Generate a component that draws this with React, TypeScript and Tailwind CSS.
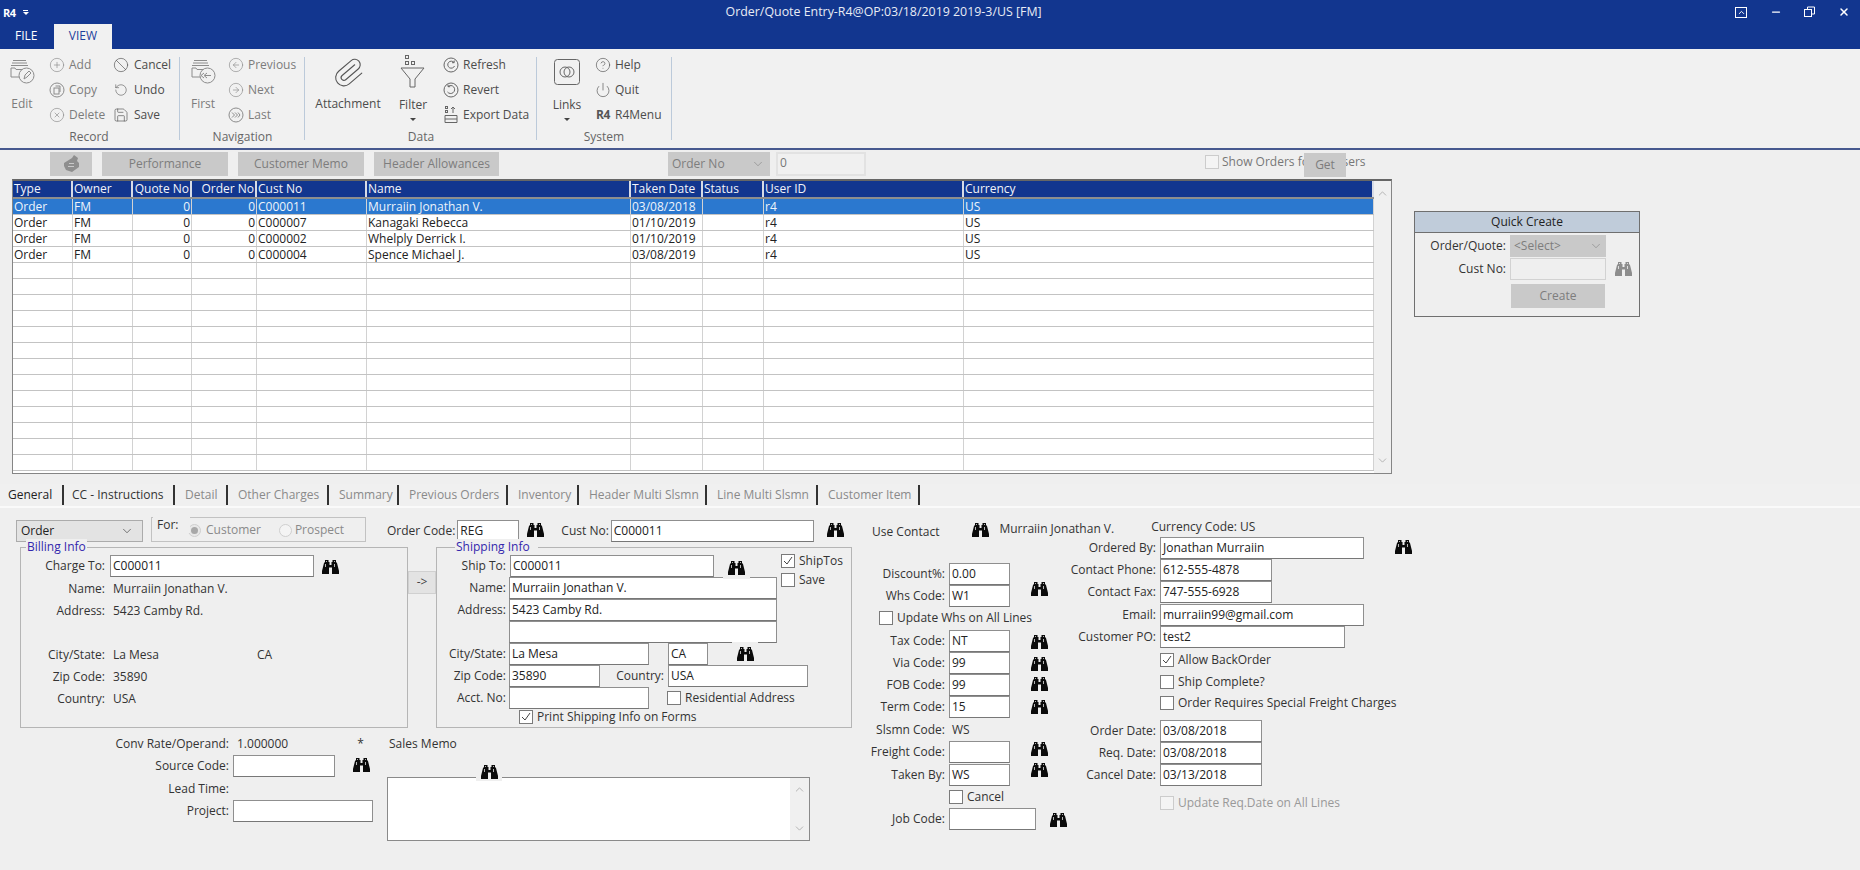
import { ReactNode } from 'react';
import {
  Ban, ChevronDown, ChevronUp, CircleArrowLeft, CircleArrowRight, CircleHelp, CirclePlus, CircleX, Minus, Paperclip, Power, RotateCcw, Save, X,
} from 'lucide-react';

const columns = [
  { title: 'Type', width: 'w-[60px]' },
  { title: 'Owner', width: 'w-[60px]' },
  { title: 'Quote No', width: 'w-[59px]', right: true },
  { title: 'Order No', width: 'w-[65px]', right: true },
  { title: 'Cust No', width: 'w-[110px]' },
  { title: 'Name', width: 'w-[264px]' },
  { title: 'Taken Date', width: 'w-[72px]' },
  { title: 'Status', width: 'w-[61px]' },
  { title: 'User ID', width: 'w-[200px]' },
  { title: 'Currency', width: 'w-[410px]' },
];

const orders = [
  ['Order', 'FM', '0', '0', 'C000011', 'Murraiin Jonathan V.', '03/08/2018', '', 'r4', 'US'],
  ['Order', 'FM', '0', '0', 'C000007', 'Kanagaki Rebecca', '01/10/2019', '', 'r4', 'US'],
  ['Order', 'FM', '0', '0', 'C000002', 'Whelply Derrick I.', '01/10/2019', '', 'r4', 'US'],
  ['Order', 'FM', '0', '0', 'C000004', 'Spence Michael J.', '03/08/2019', '', 'r4', 'US'],
  ...Array.from({ length: 13 }, () => ['', '', '', '', '', '', '', '', '', '']),
];

const tabs = [
  { label: 'General', width: 'w-[64px]', text: 'text-[#222] pl-2' },
  { label: 'CC - Instructions', width: 'w-[111px]', text: 'text-[#333] pl-2' },
  { label: 'Detail', width: 'w-[53px]', text: 'text-[#8a8a8a] pl-2.5' },
  { label: 'Other Charges', width: 'w-[101px]', text: 'text-[#8a8a8a] pl-2.5' },
  { label: 'Summary', width: 'w-[70px]', text: 'text-[#8a8a8a] pl-2.5' },
  { label: 'Previous Orders', width: 'w-[109px]', text: 'text-[#8a8a8a] pl-2.5' },
  { label: 'Inventory', width: 'w-[71px]', text: 'text-[#8a8a8a] pl-2.5' },
  { label: 'Header Multi Slsmn', width: 'w-[128px]', text: 'text-[#8a8a8a] pl-2.5' },
  { label: 'Line Multi Slsmn', width: 'w-[111px]', text: 'text-[#8a8a8a] pl-2.5' },
  { label: 'Customer Item', width: 'w-[102px]', text: 'text-[#8a8a8a] pl-2.5' },
];

// ribbon artwork
const StackIcon = ({ children }: { children: ReactNode }) => (
  <svg width="28" height="28" viewBox="0 0 28 28" fill="none" stroke="#8c8c8c" strokeWidth="1">
    <path d="M5 2.5h13M4 5h15M3 7.5h17" />
    <path d="M11 19H3V10h4l1 1.5h10" />
    <circle cx="18.5" cy="17.5" r="7.5" fill="#f1f1f1" />
    {children}
  </svg>
);

const FilterIcon = () => (
  <svg width="28" height="34" viewBox="0 0 28 34" fill="none" stroke="#666" strokeWidth="1">
    <rect x="6.5" y="0.5" width="3" height="3" />
    <rect x="6.5" y="6.5" width="3" height="3" />
    <rect x="12.5" y="6.5" width="3" height="3" />
    <path d="M2 13h23l-9 11v8h-5v-8z" />
  </svg>
);

const LinksIcon = () => (
  <svg width="26" height="26" viewBox="0 0 26 26" fill="none" stroke="#666" strokeWidth="1">
    <rect x="0.5" y="0.5" width="25" height="25" rx="3" />
    <circle cx="11" cy="13" r="5" />
    <circle cx="15" cy="13" r="5" />
  </svg>
);

const CircleGlyph = ({ d, stroke = '#666' }: { d: string; stroke?: string }) => (
  <svg width="16" height="16" viewBox="0 0 16 16" fill="none" stroke={stroke} strokeWidth="1">
    <circle cx="8" cy="8" r="7" />
    <path d={d} />
  </svg>
);

const CopyIcon = () => (
  <svg width="16" height="16" viewBox="0 0 16 16" fill="none" stroke="#8c8c8c" strokeWidth="1">
    <circle cx="8" cy="8" r="7" />
    <rect x="5" y="6" width="5" height="6" />
    <path d="M6.5 4h4.5v6" />
  </svg>
);

const ExportIcon = () => (
  <svg width="14" height="17" viewBox="0 0 14 17" fill="none" stroke="#666" strokeWidth="1">
    <rect x="1.5" y="0.5" width="2" height="2" />
    <rect x="1.5" y="4.5" width="2" height="2" />
    <path d="M9 7V1M7 3l2-2 2 2" />
    <path d="M1 9.5h12M1 9.5v7h12v-7M1 13h12" />
  </svg>
);

const BinocularsIcon = () => (
  <svg width="17" height="15" viewBox="0 0 17 15">
    <path fill="currentColor" d="M3 1h3.5v2H7.500v3h2V3H10.500V1H14v2l1 1 2 8v3H10V8.500H7V15H0v-3l2-8 1-1z" />
    <path fill="#fff" opacity="0.7" d="M4 2h1v1H4zM12 2h1v1h-1zM3 5h1v3H3zM12 5h1v3h-1z" />
  </svg>
);

const Logo = ({ className }: { className: string }) => (
  <span className={`font-bold tracking-[-0.5px] leading-none ${className}`}>R4</span>
);

const LargeItem = ({ icon, label, width, arrow, muted }: { icon: ReactNode; label: string; width: string; arrow?: boolean; muted?: boolean }) => (
  <div className={`flex flex-col items-center shrink-0 ${width}`}>
    <div className="h-[43px] pb-[3px] flex items-center justify-center">{icon}</div>
    <span className={`h-[17px] leading-[17px] ${arrow ? 'mt-[1px]' : ''} ${muted ? 'text-[#7c7c7c]' : 'text-[#4c4c4c]'}`}>{label}</span>
    {arrow && <span className="mt-[5px] w-0 h-0 border-x-[3px] border-t-[3px] border-x-transparent border-t-[#444]" />}
  </div>
);

const SmallItem = ({ icon, label, muted, gap = 'ml-1' }: { icon: ReactNode; label: string; muted?: boolean; gap?: string }) => (
  <div className="h-[25px] flex items-center">
    <span className="w-4 h-4 flex items-center justify-center shrink-0">{icon}</span>
    <span className={`${gap} whitespace-nowrap ${muted ? 'text-[#7c7c7c]' : 'text-[#4c4c4c]'}`}>{label}</span>
  </div>
);

const RibbonGroup = ({ width, label, labelPad, children }: { width: string; label: string; labelPad: string; children: ReactNode }) => (
  <div className={`flex flex-col shrink-0 ${width}`}>
    <div className="h-[79px] pt-[3px] flex">{children}</div>
    <div className={`h-[18px] leading-[18px] text-[#666] text-center ${labelPad}`}>{label}</div>
  </div>
);

const Separator = () => <div className="w-px h-[83px] mt-2 bg-[#bccada] shrink-0" />;

// form controls
const Binoc = ({ className = '', disabled }: { className?: string; disabled?: boolean }) => (
  <span className={`shrink-0 flex items-center justify-center ${disabled ? 'text-[#8d8d8d]' : 'text-[#0b0b0b]'} ${className}`}>
    <BinocularsIcon />
  </span>
);

const Input = ({ value = '', className }: { value?: string; className: string }) => (
  <div className={`h-[22px] bg-white border border-[#8f8f8f] border-b-[#777] pl-[2px] leading-[19px] text-[#222] overflow-hidden shrink-0 ${className}`}>
    {value}
  </div>
);

const Check = ({ checked, disabled }: { checked?: boolean; disabled?: boolean }) => (
  <span className={`w-[14px] h-[14px] flex items-center justify-center border shrink-0 ${disabled ? 'border-[#ccc] bg-[#f4f4f4]' : 'border-[#7a7a7a] bg-white'}`}>
    {checked && (
      <svg width="12" height="12" viewBox="0 0 12 12" fill="none" stroke="#444" strokeWidth="1">
        <path d="M2 6l3 3 5-7" />
      </svg>
    )}
  </span>
);

const CheckRow = ({ label, checked, disabled, className = '' }: { label: string; checked?: boolean; disabled?: boolean; className?: string }) => (
  <div className={`flex items-center h-[14px] ${className}`}>
    <Check checked={checked} disabled={disabled} />
    <span className={`ml-[4px] whitespace-nowrap ${disabled ? 'text-[#999]' : 'text-[#333]'}`}>{label}</span>
  </div>
);

const Label = ({ children, className }: { children?: ReactNode; className: string }) => (
  <span className={`text-right whitespace-nowrap text-[#333] shrink-0 ${className}`}>{children}</span>
);

const Legend = ({ children, className }: { children: ReactNode; className: string }) => (
  <span className={`absolute -top-[9px] bg-[#efefef] px-[1px] leading-[16px] text-[#3427ad] ${className}`}>{children}</span>
);

const ActionButton = ({ children, className }: { children: ReactNode; className: string }) => (
  <div className={`h-6 bg-[#c9c9c9] flex items-center justify-center text-[#7d7d7d] shrink-0 ${className}`}>{children}</div>
);

export default function App() {
  return (
    <div className="w-[1860px] h-[870px] overflow-hidden bg-[#efefef] text-[12px] font-['Open_Sans',sans-serif]">
      {/* title bar */}
      <div className="h-6 bg-[#12368f] text-white flex items-center relative">
        <Logo className="ml-[3px] text-[11px]" />
        <span className="ml-[7px] flex flex-col gap-[1px] items-center w-[6px]">
          <span className="w-[5px] h-px bg-white" />
          <span className="w-0 h-0 border-x-[3px] border-t-[3px] border-x-transparent border-t-white" />
        </span>
        <span className="ml-[697px] text-[12.4px] text-[#e8ecf5] whitespace-nowrap">Order/Quote Entry-R4@OP:03/18/2019 2019-3/US [FM]</span>
        <div className="ml-auto flex items-center">
          <span className="w-3 h-[11px] border border-white flex items-center justify-center">
            <ChevronUp size={9} strokeWidth={2.5} />
          </span>
          <Minus size={12} strokeWidth={2.5} className="ml-[23px]" />
          <svg width="12" height="12" viewBox="0 0 12 12" fill="none" stroke="white" className="ml-[22px]">
            <rect x="0.5" y="3.5" width="7" height="7" />
            <path d="M3.5 3V1h7v7H8" />
          </svg>
          <X size={12} strokeWidth={3} className="ml-[22px] mr-[10px]" />
        </div>
      </div>

      {/* menu tabs */}
      <div className="h-[25px] bg-[#12368f] flex items-end">
        <span className="w-[54px] h-[25px] pl-[15px] leading-[24px] text-white">FILE</span>
        <span className="w-[58px] h-[25px] bg-[#f1f1f1] text-center leading-[24px] text-[#1e3f9c]">VIEW</span>
      </div>

      {/* ribbon */}
      <div className="h-[101px] bg-[#f1f1f1] border-b-2 border-[#47598f] flex">
        <RibbonGroup width="w-[179px]" label="Record" labelPad="pr-[1px]">
          <LargeItem
            width="w-11"
            muted
            label="Edit"
            icon={
              <StackIcon>
                <path d="M16 21l1-4 4-4 2 2-4 4z" />
              </StackIcon>
            }
          />
          <div className="ml-[5px] w-[64px]">
            <SmallItem muted icon={<CirclePlus size={16} strokeWidth={1} color="#8c8c8c" />} label="Add" />
            <SmallItem muted icon={<CopyIcon />} label="Copy" />
            <SmallItem muted icon={<CircleX size={16} strokeWidth={1} color="#8c8c8c" />} label="Delete" />
          </div>
          <div>
            <SmallItem gap="ml-[5px]" icon={<Ban size={16} strokeWidth={1} color="#555" />} label="Cancel" />
            <SmallItem gap="ml-[5px]" icon={<RotateCcw size={14} strokeWidth={1} color="#555" />} label="Undo" />
            <SmallItem gap="ml-[5px]" icon={<Save size={16} strokeWidth={1} color="#555" />} label="Save" />
          </div>
        </RibbonGroup>
        <Separator />
        <RibbonGroup width="w-[124px]" label="Navigation" labelPad="pl-[1px]">
          <LargeItem
            width="w-[46px]"
            muted
            label="First"
            icon={
              <StackIcon>
                <path d="M22 17.5h-6M18 15l-3 2.5 3 2.5M15 15l-3 2.5 3 2.5" />
              </StackIcon>
            }
          />
          <div className="ml-[2px]">
            <SmallItem muted icon={<CircleArrowLeft size={16} strokeWidth={1} color="#8c8c8c" />} label="Previous" />
            <SmallItem muted icon={<CircleArrowRight size={16} strokeWidth={1} color="#8c8c8c" />} label="Next" />
            <SmallItem muted icon={<CircleGlyph stroke="#8c8c8c" d="M4 5.500L6.500 8 4 10.500M7 5.500L9.500 8 7 10.500M10 5.500L12 8l-2 2.500" />} label="Last" />
          </div>
        </RibbonGroup>
        <Separator />
        <RibbonGroup width="w-[231px]" label="Data" labelPad="pl-[1px]">
          <LargeItem
            width="w-[80px] ml-[3px]"
            label="Attachment"
            icon={<Paperclip size={33} strokeWidth={0.8} color="#555" className="rotate-[5deg]" />}
          />
          <LargeItem width="w-10 ml-[5px]" label="Filter" arrow icon={<FilterIcon />} />
          <div className="ml-[10px]">
            <SmallItem icon={<CircleGlyph d="M11 5.500A3.500 3.500 0 1 0 11.500 9M11.200 3.500v2.200H9" />} label="Refresh" />
            <SmallItem icon={<CircleGlyph d="M5 4.500a4 4 0 1 1-.5 5.500M5 2.500v2.200h2.200" />} label="Revert" />
            <SmallItem icon={<ExportIcon />} label="Export Data" />
          </div>
        </RibbonGroup>
        <Separator />
        <RibbonGroup width="w-[134px]" label="System" labelPad="">
          <LargeItem width="w-10 ml-[10px]" label="Links" arrow icon={<LinksIcon />} />
          <div className="ml-2">
            <SmallItem icon={<CircleHelp size={16} strokeWidth={1} color="#555" />} label="Help" />
            <SmallItem icon={<Power size={16} strokeWidth={1} color="#555" />} label="Quit" />
            <SmallItem icon={<Logo className="text-[12px] text-[#555]" />} label="R4Menu" />
          </div>
        </RibbonGroup>
        <Separator />
      </div>

      {/* action row */}
      <div className="h-[29px] pt-[2px] pl-[50px] flex items-start">
        <ActionButton className="w-[42px]">
          <svg width="20" height="18" viewBox="0 0 20 18" fill="#8e8e8e">
            <path d="M3 8l8-5 2-3 4 3-1 3 2 2v4l-7 5-6-2-2-4z" />
            <path d="M8 8h5v1H8zM7 11h6v1H7z" fill="#c9c9c9" />
          </svg>
        </ActionButton>
        <ActionButton className="w-[126px] ml-[10px]">Performance</ActionButton>
        <ActionButton className="w-[126px] ml-[10px]">Customer Memo</ActionButton>
        <ActionButton className="w-[125px] ml-[10px]">Header Allowances</ActionButton>
        <ActionButton className="w-[102px] ml-[169px] !justify-start pl-1">
          <span>Order No</span>
          <ChevronDown size={14} strokeWidth={1} className="ml-auto mr-[5px]" />
        </ActionButton>
        <div className="w-[90px] h-6 ml-[6px] border-2 border-[#e2e2e2] bg-[#f0f0f0] pl-[2px] leading-[18px] text-[#777]">0</div>
        <div className="ml-[339px] mt-[1px] flex items-center relative">
          <Check disabled />
          <span className="ml-[3px] whitespace-nowrap text-[#777]">Show Orders for All Users</span>
          <ActionButton className="absolute left-[99px] top-0 w-[42px]">Get</ActionButton>
        </div>
      </div>

      {/* orders grid and quick create */}
      <div className="flex items-start">
        <div className="ml-3 w-[1380px] h-[295px] bg-white border border-[#858585] border-t-2 border-t-[#666] flex overflow-hidden">
          <div className="w-[1361px] shrink-0">
            <div className="flex h-[18px] bg-[#12368f] border-b-2 border-[#8e8e8e]">
              {columns.map((col) => (
                <div
                  key={col.title}
                  className={`${col.width} shrink-0 border-r-2 border-[#d8dce6] px-[1px] leading-[15px] text-[#f2f4fa] whitespace-nowrap overflow-hidden ${col.right ? 'text-right' : ''}`}
                >
                  {col.title}
                </div>
              ))}
            </div>
            {orders.map((row, i) => (
              <div key={i} className={`flex h-4 border-b border-[#c3c3c3] ${i === 0 ? 'bg-[#2b78cf] text-[#eef4fb]' : 'text-[#222]'}`}>
                {row.map((cell, c) => (
                  <div
                    key={c}
                    className={`${columns[c].width} shrink-0 border-r border-[#d2d2d2] px-[1px] leading-[15px] overflow-hidden whitespace-nowrap ${columns[c].right ? 'text-right' : ''}`}
                  >
                    {cell}
                  </div>
                ))}
              </div>
            ))}
          </div>
          <div className="flex-1 bg-[#f0f0f0] flex flex-col items-center justify-between py-1.5 text-[#a6a6a6]">
            <ChevronUp size={13} strokeWidth={1.5} />
            <ChevronDown size={13} strokeWidth={1.5} />
          </div>
        </div>

        <div className="ml-[22px] mt-8 w-[226px] h-[106px] border border-[#6f6f6f]">
          <div className="h-[21px] bg-[#c0ccda] border-b border-[#6f6f6f] text-center leading-[19px] text-[#222]">Quick Create</div>
          <div className="flex h-[23px] mt-[1px] items-center">
            <Label className="w-[91px]">Order/Quote:</Label>
            <div className="ml-1 w-[96px] h-[22px] bg-[#c9c9c9] flex items-center pl-1 text-[#7d7d7d]">
              &lt;Select&gt;
              <ChevronDown size={14} strokeWidth={1} className="ml-auto mr-[3px]" />
            </div>
          </div>
          <div className="flex h-[23px] items-center">
            <Label className="w-[91px]">Cust No:</Label>
            <div className="ml-1 w-[96px] h-[22px] bg-[#efefef] border border-[#d2d2d2]" />
            <Binoc disabled className="ml-[9px]" />
          </div>
          <ActionButton className="ml-[96px] mt-[4px] w-[94px]">Create</ActionButton>
        </div>
      </div>

      {/* detail tabs */}
      <div className="mt-[10px] h-[24px] bg-[#f0f0f0] border-b-2 border-[#fafafa] flex">
        {tabs.map((tab) => (
          <div key={tab.label} className={`${tab.width} ${tab.text} h-[20px] mt-[1px] border-r-2 border-[#333] leading-[20px] whitespace-nowrap shrink-0`}>
            {tab.label}
          </div>
        ))}
      </div>

      {/* general tab */}
      <div className="flex items-start">
        <div className="w-[860px] shrink-0">
          <div className="flex items-start h-[28px] mt-[9px]">
            <div className="ml-4 mt-[3px] w-[127px] h-[22px] bg-[#e3e3e3] border border-[#ababab] flex items-center pl-1 text-[#222]">
              Order
              <ChevronDown size={14} strokeWidth={1} className="ml-auto mr-2" />
            </div>
            <div className="ml-2 w-[215px] h-[25px] border border-[#c2c2c2] flex items-center relative">
              <span className="absolute -top-[1px] left-[1px] pl-1 pr-3 bg-[#efefef] leading-[16px] text-[#333]">For:</span>
              <span className="ml-[36px] mt-[1px] w-[13px] h-[13px] rounded-full border border-[#cfcfcf] bg-[#e8e8e8] flex items-center justify-center">
                <span className="w-[7px] h-[7px] rounded-full bg-[#a8a8a8]" />
              </span>
              <span className="ml-[5px] mt-[1px] text-[#8a8a8a]">Customer</span>
              <span className="ml-[18px] mt-[1px] w-[13px] h-[13px] rounded-full border border-[#cfcfcf] bg-[#f4f4f4]" />
              <span className="ml-[3px] mt-[1px] text-[#8a8a8a]">Prospect</span>
            </div>
            <Label className="ml-[21px] mt-[5px]">Order Code:</Label>
            <Input value="REG" className="ml-[2px] mt-[3px] w-[62px]" />
            <Binoc className="ml-2 mt-[5px]" />
            <Label className="ml-[17px] mt-[5px]">Cust No:</Label>
            <Input value="C000011" className="ml-[2px] mt-[3px] w-[203px]" />
            <Binoc className="ml-[13px] mt-[5px]" />
          </div>

          <div className="flex items-start mt-[2px]">
            <div className="ml-5 w-[388px] h-[181px] border border-[#b5b5b5] relative pt-[6px] shrink-0">
              <Legend className="left-[5px]">Billing Info</Legend>
              <div className="flex items-center h-[24px]">
                <Label className="w-[84px]">Charge To:</Label>
                <Input value="C000011" className="ml-[5px] w-[204px]" />
                <Binoc className="ml-2" />
              </div>
              {[
                ['Name:', 'Murraiin Jonathan V.', ''],
                ['Address:', '5423 Camby Rd.', ''],
                ['', '', ''],
                ['City/State:', 'La Mesa', 'CA'],
                ['Zip Code:', '35890', ''],
                ['Country:', 'USA', ''],
              ].map(([label, value, state], i) => (
                <div key={i} className="flex items-center h-[22px]">
                  <Label className="w-[84px]">{label}</Label>
                  <span className="ml-2 w-[144px] text-[#333]">{value}</span>
                  <span className="text-[#333]">{state}</span>
                </div>
              ))}
            </div>
            <div className="mt-6 w-[28px] h-[23px] bg-[#e3e3e3] border border-[#d0d0d0] text-center leading-[20px] text-[#444] shrink-0">-&gt;</div>
            <div className="w-[416px] h-[181px] border border-[#b5b5b5] relative pt-[6px] flex shrink-0">
              <Legend className="left-[18px] pr-2">Shipping Info</Legend>
              <div className="w-[342px] shrink-0">
                <div className="flex items-center h-[23px]">
                  <Label className="w-[69px]">Ship To:</Label>
                  <Input value="C000011" className="ml-1 w-[204px]" />
                  <Binoc className="relative z-10 ml-[9px] w-[27px] h-[24px] mt-[3px] bg-[#efefef]" />
                </div>
                <div className="flex items-center h-[22px]">
                  <Label className="w-[69px]">Name:</Label>
                  <Input value="Murraiin Jonathan V." className="ml-[3px] w-[268px]" />
                </div>
                <div className="flex items-center h-[22px]">
                  <Label className="w-[69px]">Address:</Label>
                  <Input value="5423 Camby Rd." className="ml-[3px] w-[268px]" />
                </div>
                <div className="flex items-center h-[22px]">
                  <Label className="w-[69px]" />
                  <Input className="ml-[3px] w-[268px]" />
                </div>
                <div className="flex items-center h-[22px]">
                  <Label className="w-[69px]">City/State:</Label>
                  <Input value="La Mesa" className="ml-[3px] w-[140px]" />
                  <Input value="CA" className="ml-[19px] w-10" />
                  <Binoc className="relative z-10 ml-[24px] w-[26px] h-[22px] -mt-[2px] bg-[#efefef]" />
                </div>
                <div className="flex items-center h-[22px]">
                  <Label className="w-[69px]">Zip Code:</Label>
                  <Input value="35890" className="ml-[3px] w-[91px]" />
                  <Label className="w-[64px]">Country:</Label>
                  <Input value="USA" className="ml-1 w-[140px]" />
                </div>
                <div className="flex items-center h-[22px]">
                  <Label className="w-[69px]">Acct. No:</Label>
                  <Input className="ml-[3px] w-[140px]" />
                  <CheckRow label="Residential Address" className="ml-[18px]" />
                </div>
                <CheckRow checked label="Print Shipping Info on Forms" className="ml-[82px] mt-[1px]" />
              </div>
              <div className="ml-[2px]">
                <CheckRow checked label="ShipTos" />
                <CheckRow label="Save" className="mt-[5px]" />
              </div>
            </div>
          </div>

          <div className="flex items-start mt-[6px]">
            <div className="w-[387px] shrink-0">
              <div className="flex items-center h-[20px]">
                <Label className="w-[229px]">Conv Rate/Operand:</Label>
                <span className="ml-2 -mt-[1px] text-[#333]">1.000000</span>
                <span className="ml-[69px] text-[#333]">*</span>
              </div>
              <div className="flex items-center h-[23px]">
                <Label className="w-[229px]">Source Code:</Label>
                <Input className="ml-1 w-[102px]" />
                <Binoc className="ml-[18px] -mt-[2px]" />
              </div>
              <div className="flex items-center h-[23px]">
                <Label className="w-[229px]">Lead Time:</Label>
              </div>
              <div className="flex items-center h-[22px]">
                <Label className="w-[229px]">Project:</Label>
                <Input className="ml-1 w-[140px]" />
              </div>
            </div>
            <div>
              <div className="h-[20px] pl-[2px] leading-[20px] text-[#333]">Sales Memo</div>
              <div className="h-[23px] flex items-start">
                <Binoc className="relative z-10 ml-[89px] w-[26px] h-[20px] mt-[7px] bg-[#efefef]" />
              </div>
              <div className="w-[423px] h-[64px] bg-white border border-[#8a8a8a] flex justify-end">
                <div className="w-[19px] bg-[#f0f0f0] flex flex-col items-center justify-between py-[5px] text-[#a6a6a6]">
                  <ChevronUp size={13} strokeWidth={1.5} />
                  <ChevronDown size={13} strokeWidth={1.5} />
                </div>
              </div>
            </div>
          </div>
        </div>

        {/* contact and codes */}
        <div className="flex-1">
          <div className="h-[29px] flex items-start text-[#333]">
            <span className="ml-3 mt-[15px] whitespace-nowrap">Use Contact</span>
            <Binoc className="ml-[33px] mt-[14px]" />
            <span className="ml-[10px] mt-[12px] whitespace-nowrap">Murraiin Jonathan V.</span>
            <span className="ml-[37px] mt-[10px] whitespace-nowrap">Currency Code:</span>
            <span className="ml-[3px] mt-[10px]">US</span>
          </div>
          <div className="flex items-start">
            <div className="w-[200px] shrink-0 pt-[25px]">
              <div className="flex items-center h-[23px]">
                <Label className="w-[85px]">Discount%:</Label>
                <Input value="0.00" className="ml-1 w-[61px]" />
              </div>
              <div className="flex items-center h-[22px]">
                <Label className="w-[85px]">Whs Code:</Label>
                <Input value="W1" className="ml-1 w-[61px]" />
                <Binoc className="ml-[21px] -mt-[16px]" />
              </div>
              <CheckRow label="Update Whs on All Lines" className="ml-[19px] mt-[4px]" />
              {[
                ['Tax Code:', 'NT', 'mt-0'],
                ['Via Code:', '99', 'mt-0'],
                ['FOB Code:', '99', '-mt-[3px]'],
                ['Term Code:', '15', '-mt-[2px]'],
              ].map(([label, value, offset], i) => (
                <div key={label} className={`flex items-center h-[22px] ${i === 0 ? 'mt-[5px]' : ''}`}>
                  <Label className="w-[85px]">{label}</Label>
                  <Input value={value} className="ml-1 w-[61px]" />
                  <Binoc className={`ml-[21px] ${offset}`} />
                </div>
              ))}
              <div className="flex items-center h-[23px]">
                <Label className="w-[85px]">Slsmn Code:</Label>
                <span className="ml-[7px] text-[#333]">WS</span>
              </div>
              <div className="flex items-center h-[22px]">
                <Label className="w-[85px]">Freight Code:</Label>
                <Input className="ml-1 w-[61px]" />
                <Binoc className="ml-[21px] -mt-[8px]" />
              </div>
              <div className="flex items-center h-[23px]">
                <Label className="w-[85px]">Taken By:</Label>
                <Input value="WS" className="ml-1 w-[61px]" />
                <Binoc className="ml-[21px] -mt-[11px]" />
              </div>
              <CheckRow label="Cancel" className="ml-[89px] mt-[4px]" />
              <div className="flex items-center h-[22px] mt-[4px]">
                <Label className="w-[85px]">Job Code:</Label>
                <Input className="ml-1 w-[87px]" />
                <Binoc className="ml-[14px]" />
              </div>
            </div>
            <div>
              <div className="flex items-center h-[22px]">
                <Label className="w-[96px]">Ordered By:</Label>
                <Input value="Jonathan Murraiin" className="ml-1 w-[204px]" />
                <Binoc className="ml-[31px] -mt-[4px]" />
              </div>
              <div className="flex items-center h-[22px]">
                <Label className="w-[96px]">Contact Phone:</Label>
                <Input value="612-555-4878" className="ml-1 w-[112px]" />
              </div>
              <div className="flex items-center h-[22px]">
                <Label className="w-[96px]">Contact Fax:</Label>
                <Input value="747-555-6928" className="ml-1 w-[112px]" />
              </div>
              <div className="flex items-center h-[23px]">
                <Label className="w-[96px]">Email:</Label>
                <Input value="murraiin99@gmail.com" className="ml-1 w-[204px]" />
              </div>
              <div className="flex items-center h-[22px]">
                <Label className="w-[96px]">Customer PO:</Label>
                <Input value="test2" className="ml-1 w-[185px]" />
              </div>
              <CheckRow checked label="Allow BackOrder" className="ml-[100px] mt-[5px]" />
              <CheckRow label="Ship Complete?" className="ml-[100px] mt-2" />
              <CheckRow label="Order Requires Special Freight Charges" className="ml-[100px] mt-[7px]" />
              <div className="flex items-center h-[23px] mt-[9px]">
                <Label className="w-[96px]">Order Date:</Label>
                <Input value="03/08/2018" className="ml-1 w-[102px]" />
              </div>
              <div className="flex items-center h-[22px]">
                <Label className="w-[96px]">Req. Date:</Label>
                <Input value="03/08/2018" className="ml-1 w-[102px]" />
              </div>
              <div className="flex items-center h-[22px]">
                <Label className="w-[96px]">Cancel Date:</Label>
                <Input value="03/13/2018" className="ml-1 w-[102px]" />
              </div>
              <CheckRow disabled label="Update Req.Date on All Lines" className="ml-[100px] mt-[10px]" />
            </div>
          </div>
        </div>
      </div>
    </div>
  );
}
